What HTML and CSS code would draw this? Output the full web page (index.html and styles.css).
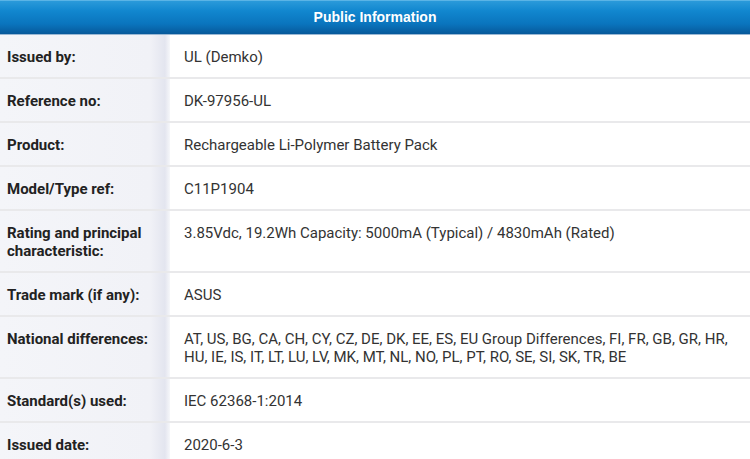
FILE: index.html
```html
<!DOCTYPE html>
<html>
<head>
<meta charset="utf-8">
<link rel="stylesheet" href="styles.css">
</head>
<body>
<div class="panel">
  <div class="header">Public Information</div>
  <div class="rows">
    <div class="row"><div class="label">Issued by:</div><div class="value">UL (Demko)</div></div>
    <div class="row"><div class="label">Reference no:</div><div class="value">DK-97956-UL</div></div>
    <div class="row"><div class="label">Product:</div><div class="value">Rechargeable Li-Polymer Battery Pack</div></div>
    <div class="row"><div class="label">Model/Type ref:</div><div class="value">C11P1904</div></div>
    <div class="row"><div class="label">Rating and principal characteristic:</div><div class="value">3.85Vdc, 19.2Wh Capacity: 5000mA (Typical) / 4830mAh (Rated)</div></div>
    <div class="row"><div class="label">Trade mark (if any):</div><div class="value">ASUS</div></div>
    <div class="row"><div class="label">National differences:</div><div class="value">AT, US, BG, CA, CH, CY, CZ, DE, DK, EE, ES, EU Group Differences, FI, FR, GB, GR, HR, HU, IE, IS, IT, LT, LU, LV, MK, MT, NL, NO, PL, PT, RO, SE, SI, SK, TR, BE</div></div>
    <div class="row"><div class="label">Standard(s) used:</div><div class="value">IEC 62368-1:2014</div></div>
    <div class="row"><div class="label">Issued date:</div><div class="value">2020-6-3</div></div>
  </div>
</div>
</body>
</html>
```
FILE: styles.css
```css
html, body {
  margin: 0;
  padding: 0;
  background: #ffffff;
}
body {
  width: 750px;
  height: 459px;
  overflow: hidden;
  font-family: Roboto, "Liberation Sans", sans-serif;
}
.panel {
  display: flex;
  flex-direction: column;
}
.header {
  height: 35px;
  box-sizing: border-box;
  display: flex;
  align-items: center;
  justify-content: center;
  padding-bottom: 1px;
  color: #ffffff;
  font-family: "Liberation Sans", Arial, sans-serif;
  font-weight: bold;
  font-size: 14px;
  background: linear-gradient(to bottom, #2a9ada 0%, #1187cf 30%, #0a74bd 70%, #07599a 100%);
  border-top: 1px solid #5ab4e6;
  border-bottom: 1px solid #9ab8d4;
}
.rows {
  display: flex;
  flex-direction: column;
}
.row {
  display: grid;
  grid-template-columns: 170px 1fr;
  border-bottom: 2px solid #e9e9eb;
}
.label {
  background: linear-gradient(to right, #f4f5f9 0%, #f1f2f7 88%, #e3e5ef 97%, #f6f7fa 100%);
  padding: 13px 8px 11px 7px;
  font-size: 15px;
  line-height: 18px;
  font-weight: bold;
  color: #222222;
}
.value {
  padding: 13px 10px 11px 14px;
  font-size: 15px;
  line-height: 18px;
  color: #333333;
}
```
